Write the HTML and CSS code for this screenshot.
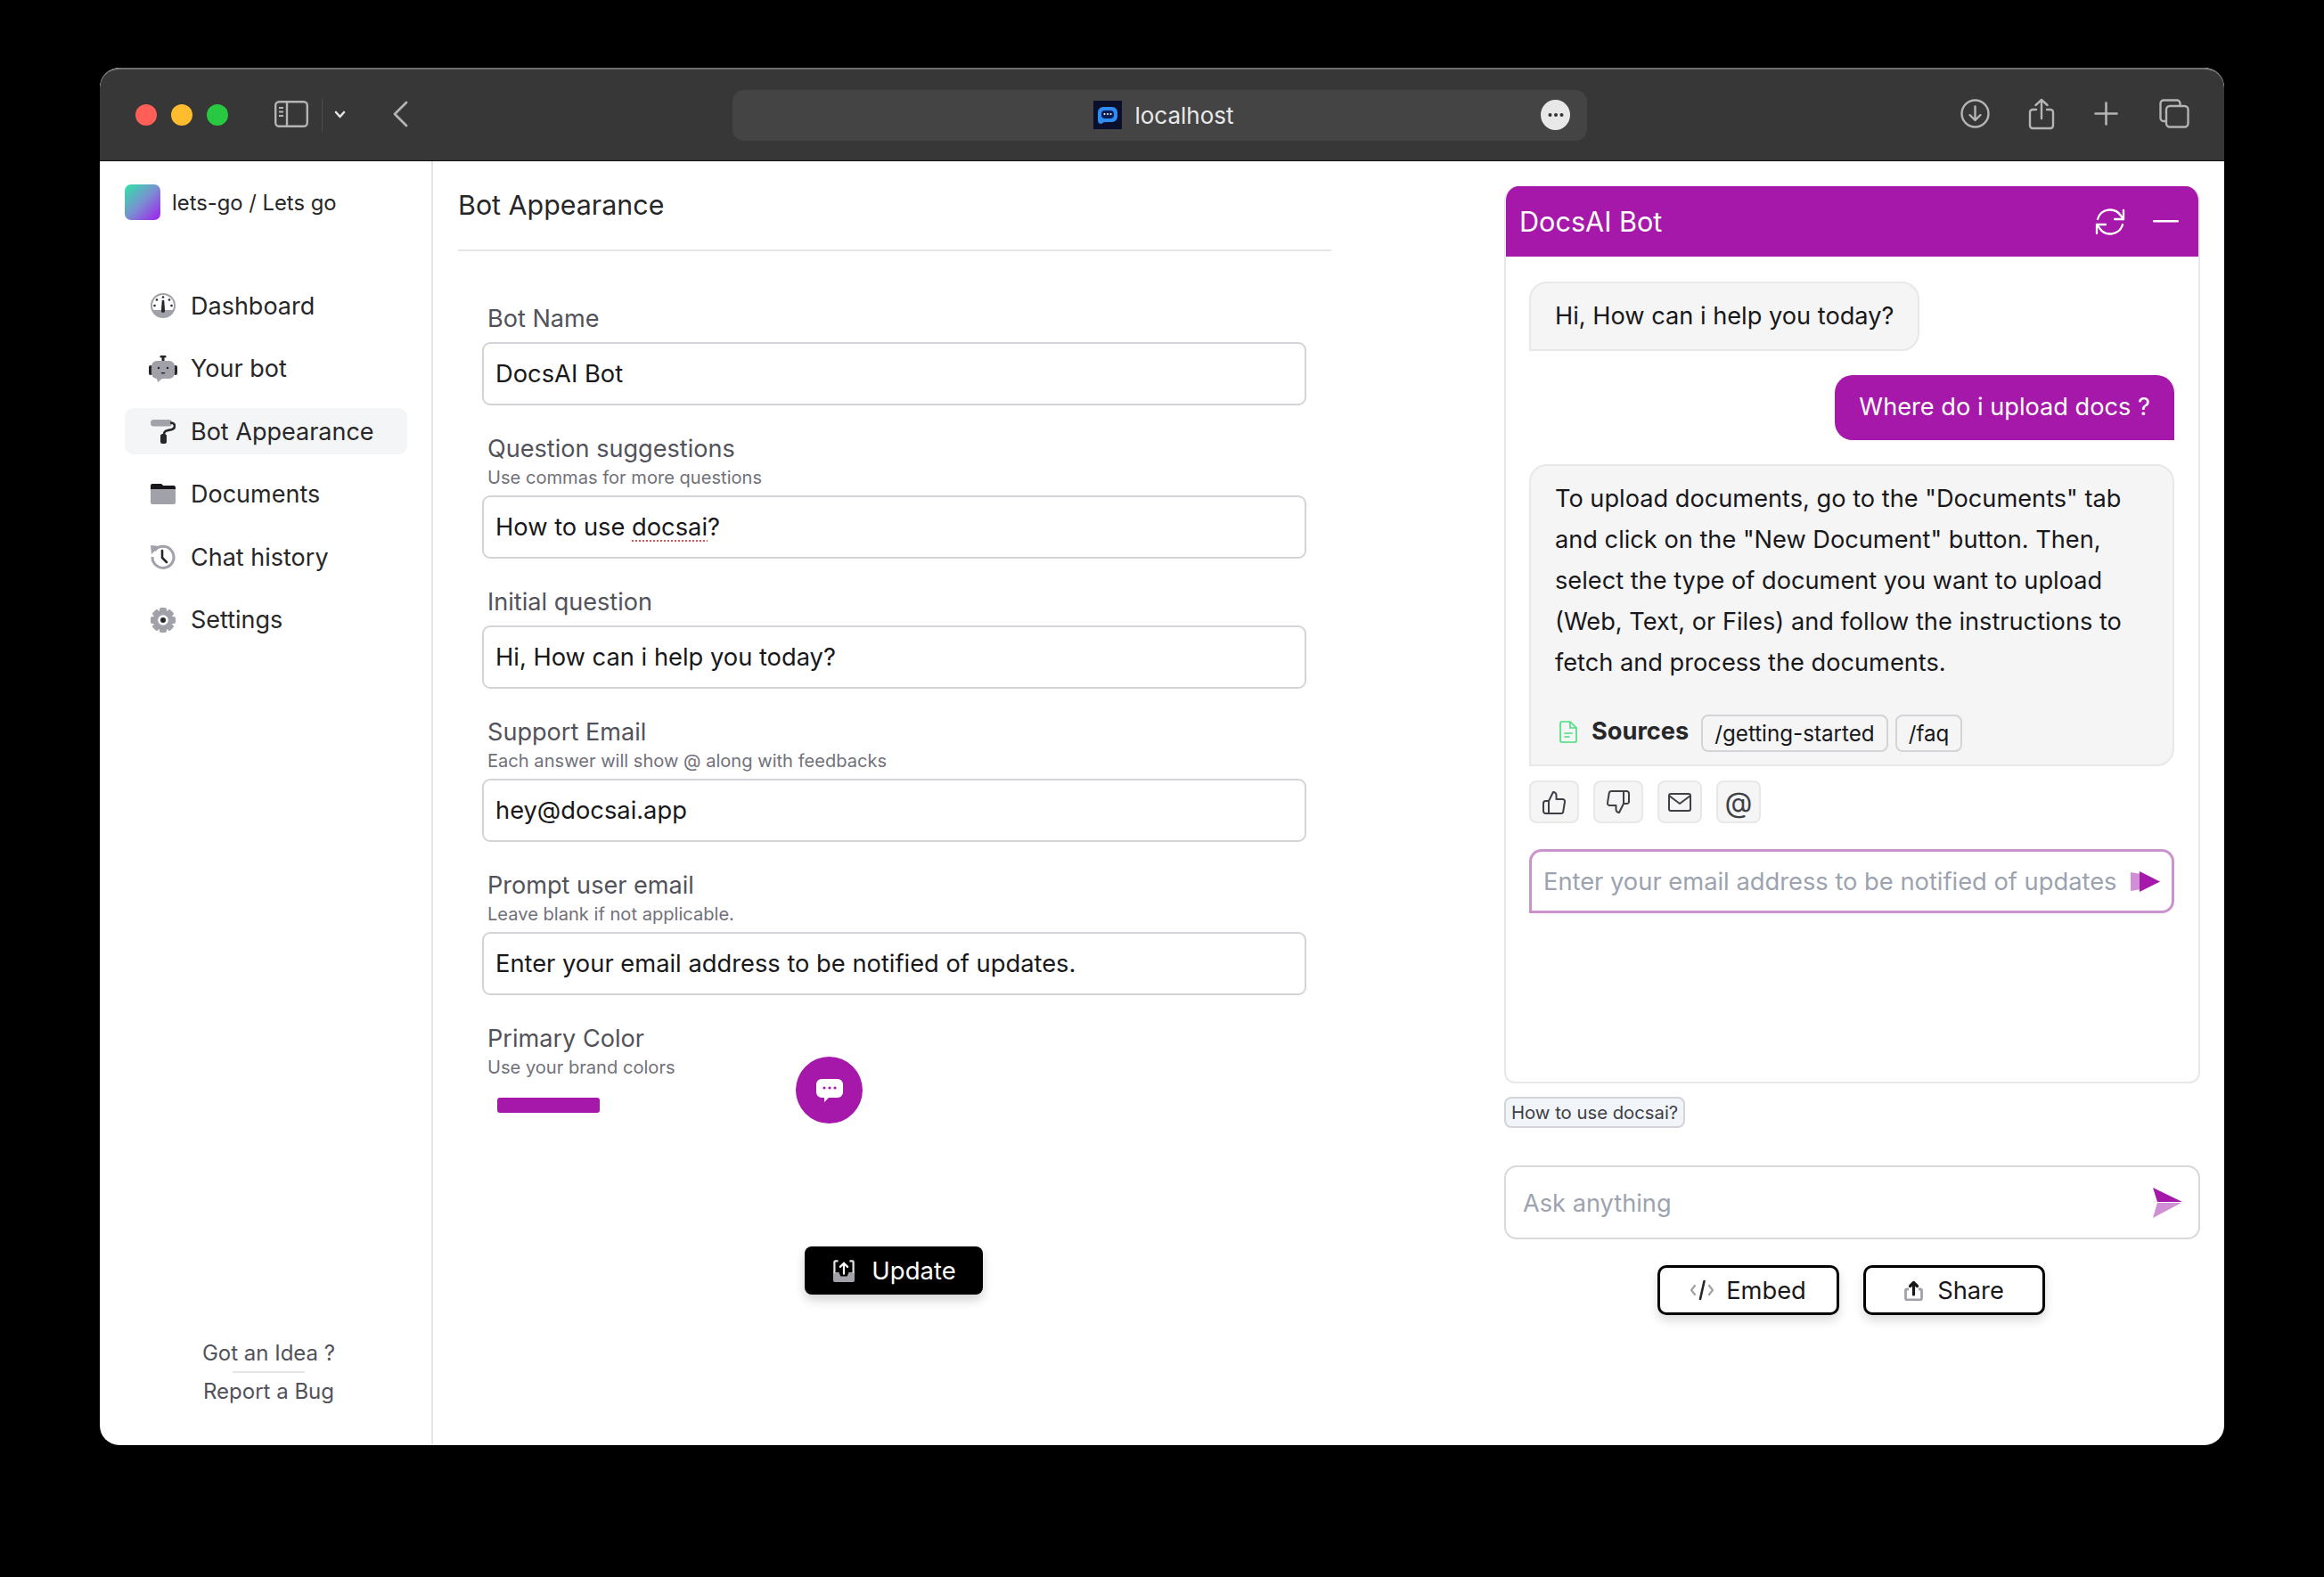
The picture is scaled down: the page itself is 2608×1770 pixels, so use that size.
FILE: index.html
```html
<!DOCTYPE html>
<html lang="en">
<head>
<meta charset="utf-8">
<title>Bot Appearance</title>
<link rel="stylesheet" href="styles.css">
</head>
<body>
<div class="window">
  <header class="titlebar">
    <div class="tb-left">
      <div class="lights"><span class="light red"></span><span class="light yellow"></span><span class="light green"></span></div>
      <svg class="tb-sidebar" width="38" height="30" viewBox="0 0 38 30" fill="none" stroke="#b4b4b4" stroke-width="2.4"><rect x="1.2" y="1.2" width="35.6" height="27.6" rx="4"/><path d="M14 1.5v27"/><path d="M5 8h5M5 12.5h5M5 17h5" stroke-width="1.8"/></svg>
      <span class="tb-sep"></span>
      <svg class="tb-chev" width="13" height="9" viewBox="0 0 13 9" fill="none" stroke="#e2e2e2" stroke-width="2.6" stroke-linecap="round" stroke-linejoin="round"><path d="M2 2l4.500 5L11 2"/></svg>
      <svg class="tb-back" width="18" height="30" viewBox="0 0 18 30" fill="none" stroke="#b4b4b4" stroke-width="2.8" stroke-linecap="round" stroke-linejoin="round"><path d="M16 2L3 15l13 13"/></svg>
    </div>
    <div class="urlbar">
      <svg class="favicon" width="32" height="32" viewBox="0 0 32 32"><rect width="32" height="32" fill="#0a0f2c"/><path d="M11 7h10a6 6 0 016 6v5a6 6 0 01-6 6h-9l-3 2a4 4 0 01-4-4v-9a6 6 0 016-6z" fill="#2f8cf0"/><rect x="9" y="11" width="14" height="9" rx="4" fill="#0d1c52"/><circle cx="12.500" cy="15" r="1" fill="#fff"/><circle cx="16" cy="15" r="1" fill="#fff"/><circle cx="19.500" cy="15" r="1" fill="#fff"/></svg>
      <span class="url-text">localhost</span>
      <span class="url-more"><svg width="20" height="6" viewBox="0 0 20 6" fill="#333"><circle cx="3.500" cy="3" r="2"/><circle cx="10" cy="3" r="2"/><circle cx="16.500" cy="3" r="2"/></svg></span>
    </div>
    <div class="tb-right">
      <svg width="33" height="33" viewBox="0 0 33 33" fill="none" stroke="#b4b4b4" stroke-width="2.4" stroke-linecap="round" stroke-linejoin="round"><circle cx="16.500" cy="16.500" r="15"/><path d="M16.500 8.500v15M10.500 18l6 6 6-6"/></svg>
      <svg width="30" height="36" viewBox="0 0 30 36" fill="none" stroke="#b4b4b4" stroke-width="2.4" stroke-linecap="round" stroke-linejoin="round"><path d="M9 13H5a3 3 0 00-3 3v15a3 3 0 003 3h20a3 3 0 003-3V16a3 3 0 00-3-3h-4"/><path d="M15 23V2M8.500 8L15 2l6.500 6"/></svg>
      <svg width="27" height="27" viewBox="0 0 27 27" fill="none" stroke="#b4b4b4" stroke-width="2.6" stroke-linecap="round"><path d="M13.500 1.500v24M1.500 13.500h24"/></svg>
      <svg width="34" height="33" viewBox="0 0 34 33" fill="none" stroke="#b4b4b4" stroke-width="2.4"><path d="M7 25H5a3.500 3.500 0 01-3.500-3.500V5A3.500 3.500 0 015 1.500h15A3.500 3.500 0 0123.500 5v3"/><rect x="8" y="8" width="24.500" height="23.500" rx="4"/></svg>
    </div>
  </header>

  <div class="content">
    <aside class="sidebar">
      <div class="workspace">
        <span class="ws-logo"></span>
        <span class="ws-name">lets-go / Lets go</span>
      </div>
      <nav class="nav">
        <a class="nav-item">
          <svg class="nav-icon" viewBox="0 0 28 28"><circle cx="14" cy="14" r="14" fill="#a1a1aa"/><path d="M2 14a12 12 0 0124 0c0 2.500-.6 4-1.500 5h-21C2.600 18 2 16.500 2 14z" fill="#fff"/><path d="M12.800 8h2.400l.9 12a2.100 2.100 0 11-4.200 0z" fill="#27272a"/><circle cx="14" cy="4.500" r="1.300" fill="#27272a"/><circle cx="7" cy="7.500" r="1.300" fill="#27272a"/><circle cx="21" cy="7.500" r="1.300" fill="#27272a"/><circle cx="4.500" cy="14" r="1.300" fill="#27272a"/><circle cx="23.500" cy="14" r="1.300" fill="#27272a"/></svg>
          <span>Dashboard</span>
        </a>
        <a class="nav-item">
          <svg class="nav-icon wide" viewBox="0 0 32 30"><rect x="14.500" y="2" width="3" height="6" fill="#27272a"/><rect x="12.500" y="0" width="7" height="2.500" rx="1.200" fill="#27272a"/><rect x="0" y="11" width="4" height="11" rx="2" fill="#27272a"/><rect x="28" y="11" width="4" height="11" rx="2" fill="#27272a"/><path d="M9 6h14a6 6 0 016 6v8a6 6 0 01-6 6h-8l-5 4-1-4a6 6 0 01-6-6v-8a6 6 0 016-6z" fill="#a1a1aa"/><circle cx="11" cy="14" r="1.200" fill="#27272a"/><circle cx="21" cy="14" r="1.200" fill="#27272a"/><path d="M13.500 19h5l-1 1.500h-3z" fill="#27272a"/></svg>
          <span>Your bot</span>
        </a>
        <a class="nav-item active">
          <svg class="nav-icon" viewBox="0 0 28 28"><rect x="0" y="1" width="24" height="7.500" rx="3.500" fill="#a1a1aa"/><path d="M22 4.500c4 0 5 1.500 5 3.500 0 3-2 4-5 4.500-4 .7-7 1-7 5" fill="none" stroke="#27272a" stroke-width="2.600"/><rect x="11" y="17" width="7" height="11" rx="2.500" fill="#27272a"/></svg>
          <span>Bot Appearance</span>
        </a>
        <a class="nav-item">
          <svg class="nav-icon" viewBox="0 0 28 28"><path d="M2 2h9c1.500 0 2 .6 3 2h12a2 2 0 012 2v5H0V4a2 2 0 012-2z" fill="#18181b"/><path d="M0 8h28v15a2 2 0 01-2 2H2a2 2 0 01-2-2z" fill="#a1a1aa"/></svg>
          <span>Documents</span>
        </a>
        <a class="nav-item">
          <svg class="nav-icon" viewBox="0 0 28 28"><path d="M4.500 7A12 12 0 112 14" fill="none" stroke="#a1a1aa" stroke-width="3"/><path d="M0 1l10 1-9 9z" fill="#a1a1aa"/><path d="M13 7v8l5 5" fill="none" stroke="#27272a" stroke-width="2.600" stroke-linecap="round" stroke-linejoin="round"/></svg>
          <span>Chat history</span>
        </a>
        <a class="nav-item">
          <svg class="nav-icon" viewBox="0 0 28 28"><g fill="#a1a1aa"><rect x="10" y="0" width="8" height="28" rx="2"/><rect x="10" y="0" width="8" height="28" rx="2" transform="rotate(45 14 14)"/><rect x="10" y="0" width="8" height="28" rx="2" transform="rotate(90 14 14)"/><rect x="10" y="0" width="8" height="28" rx="2" transform="rotate(135 14 14)"/><circle cx="14" cy="14" r="11"/></g><circle cx="14" cy="14" r="5.800" fill="#fff"/><circle cx="14" cy="14" r="3" fill="#27272a"/></svg>
          <span>Settings</span>
        </a>
      </nav>
      <div class="side-foot">
        <a class="foot-link">Got an Idea ?</a>
        <span class="foot-rule"></span>
        <a class="foot-link">Report a Bug</a>
      </div>
    </aside>

    <main class="main">
      <section class="settings">
        <h1 class="page-title">Bot Appearance</h1>
        <div class="form">
          <div class="field">
            <div class="label">Bot Name</div>
            <div class="input">DocsAI Bot</div>
          </div>
          <div class="field">
            <div class="label">Question suggestions</div>
            <div class="hint">Use commas for more questions</div>
            <div class="input">How to use <span class="misspelled">docsai</span>?</div>
          </div>
          <div class="field">
            <div class="label">Initial question</div>
            <div class="input">Hi, How can i help you today?</div>
          </div>
          <div class="field">
            <div class="label">Support Email</div>
            <div class="hint">Each answer will show @ along with feedbacks</div>
            <div class="input">hey@docsai.app</div>
          </div>
          <div class="field">
            <div class="label">Prompt user email</div>
            <div class="hint">Leave blank if not applicable.</div>
            <div class="input">Enter your email address to be notified of updates.</div>
          </div>
          <div class="color-row">
            <div class="color-left">
              <div class="label">Primary Color</div>
              <div class="hint">Use your brand colors</div>
              <div class="swatch"></div>
            </div>
            <div class="launcher">
              <svg width="30" height="26" viewBox="0 0 30 26"><path d="M6 0h18a6 6 0 016 6v9a6 6 0 01-6 6H14l-5 5v-5H6a6 6 0 01-6-6V6a6 6 0 016-6z" fill="#fff"/><circle cx="9" cy="10" r="1.600" fill="#a618aa"/><circle cx="15" cy="10" r="1.600" fill="#a618aa"/><circle cx="21" cy="10" r="1.600" fill="#a618aa"/></svg>
            </div>
          </div>
          <div class="update-wrap">
            <button class="update-btn">
              <svg width="24" height="27" viewBox="0 0 26 27"><path d="M0 15h7l2 5h8l2-5h7v10a2 2 0 01-2 2H2a2 2 0 01-2-2z" fill="#a1a1aa"/><path d="M6 1.500H2.500a1 1 0 00-1 1V16M20 1.500h3.500a1 1 0 011 1V16" fill="none" stroke="#e4e4e7" stroke-width="2.400"/><path d="M13 17V4M8.500 8.500L13 4l4.500 4.500" fill="none" stroke="#fff" stroke-width="2.400" stroke-linecap="round" stroke-linejoin="round"/></svg>
              <span>Update</span>
            </button>
          </div>
        </div>
      </section>

      <section class="chat">
        <div class="widget">
          <div class="widget-head">
            <span class="widget-title">DocsAI Bot</span>
            <div class="widget-tools">
              <svg width="34" height="32" viewBox="0 0 34 32" fill="none" stroke="#fff" stroke-width="2.300" stroke-linecap="round" stroke-linejoin="round"><path d="M3 13A14.500 14.500 0 0129 9l3 4"/><path d="M32 3v10H22"/><path d="M31 19A14.500 14.500 0 015 23l-3-4"/><path d="M2 29V19h10"/></svg>
              <svg width="29" height="3" viewBox="0 0 29 3"><rect width="29" height="2.600" rx="1.300" fill="#fff"/></svg>
            </div>
          </div>
          <div class="widget-body">
            <div class="bubble bot short">Hi, How can i help you today?</div>
            <div class="bubble user">Where do i upload docs ?</div>
            <div class="bubble bot long">
              <p class="answer">To upload documents, go to the "Documents" tab and click on the "New Document" button. Then, select the type of document you want to upload (Web, Text, or Files) and follow the instructions to fetch and process the documents.</p>
              <div class="sources">
                <svg class="src-icon" width="20" height="25" viewBox="0 0 20 25" fill="none" stroke="#4ade80" stroke-width="1.700" stroke-linejoin="round"><path d="M2 1h10l7 7v14a2 2 0 01-2 2H3a2 2 0 01-2-2V2z"/><path d="M12 1v7h7"/><path d="M6 14h8M6 18h5" stroke-linecap="round"/></svg>
                <strong class="src-label">Sources</strong>
                <span class="src-chip">/getting-started</span>
                <span class="src-chip">/faq</span>
              </div>
            </div>
            <div class="feedback">
              <span class="fb-btn"><svg width="26" height="27" viewBox="0 0 26 27" fill="none" stroke="#3f3f46" stroke-width="2" stroke-linecap="round" stroke-linejoin="round"><path d="M7 12l5-10a3.500 3.500 0 013.500 3.500V10h7a2.500 2.500 0 012.500 3l-1.700 10.500A2.500 2.500 0 0121.300 26H7z"/><path d="M7 12H3.500A2.500 2.500 0 001 14.500v9A2.500 2.500 0 003.500 26H7"/></svg></span>
              <span class="fb-btn"><svg width="26" height="27" viewBox="0 0 26 27" fill="none" stroke="#3f3f46" stroke-width="2" stroke-linecap="round" stroke-linejoin="round"><path d="M19 15l-5 10a3.500 3.500 0 01-3.500-3.500V17h-7A2.500 2.500 0 011 14L2.700 3.500A2.500 2.500 0 015.200 1H19z"/><path d="M19 1h3.500A2.500 2.500 0 0125 3.500V12a2.500 2.500 0 01-2.500 3H19"/></svg></span>
              <span class="fb-btn narrow"><svg width="26" height="21" viewBox="0 0 26 21" fill="none" stroke="#3f3f46" stroke-width="2" stroke-linejoin="round"><rect x="1" y="1" width="24" height="19" rx="2"/><path d="M1 3l12 9 12-9"/></svg></span>
              <span class="fb-btn narrow at">@</span>
            </div>
            <div class="email-box">
              <span class="email-ph">Enter your email address to be notified of updates</span>
              <svg width="33" height="23" viewBox="0 0 33 23"><path d="M0 1l12 2v17L0 22z" fill="#d08fd4"/><path d="M10 0l23 11.500L10 23z" fill="#a618aa"/></svg>
            </div>
          </div>
        </div>
        <div class="suggest">How to use docsai?</div>
        <div class="ask">
          <span class="ask-ph">Ask anything</span>
          <svg width="34" height="34" viewBox="0 0 34 34"><path d="M1 0l33 16H6z" fill="#a618aa"/><path d="M6 17h27L1 34z" fill="#d08fd4"/></svg>
        </div>
        <div class="chat-actions">
          <button class="out-btn">
            <svg width="26" height="24" viewBox="0 0 26 24" fill="none" stroke-linecap="round" stroke-linejoin="round"><path d="M5 7l-4 5 4 5M21 7l4 5-4 5" stroke="#a1a1aa" stroke-width="2.200"/><path d="M15.500 2l-4.500 20" stroke="#27272a" stroke-width="2.600"/></svg>
            <span>Embed</span>
          </button>
          <button class="out-btn share">
            <svg width="21" height="23" viewBox="0 0 21 23"><path d="M5 10H3a1.500 1.500 0 00-1.500 1.500V20a2 2 0 002 2h14a2 2 0 002-2v-8.500A1.500 1.500 0 0018 10h-2" fill="none" stroke="#a1a1aa" stroke-width="2.800"/><path d="M10.500 16V3M6.500 6.500l4-4 4 4" fill="none" stroke="#18181b" stroke-width="3.200" stroke-linecap="round" stroke-linejoin="round"/></svg>
            <span>Share</span>
          </button>
        </div>
      </section>
    </main>
  </div>
</div>
</body>
</html>
```
FILE: styles.css
```css
* { box-sizing: border-box; }
html, body { margin: 0; padding: 0; background: #000; }
body { width: 2608px; height: 1770px; padding: 76px 112px 0; font-family: "Inter", "Liberation Sans", sans-serif; color: #18181b; }

.window { width: 2384px; height: 1546px; border-radius: 22px; overflow: hidden; background: #fff; display: flex; flex-direction: column; }

.titlebar { flex: 0 0 105px; height: 105px; background: #373737; border-top: 2px solid #6f6f6f; border-bottom: 1px solid #111; border-radius: 22px 22px 0 0; display: grid; grid-template-columns: 710px 959px 1fr; align-items: center; }
.tb-left { display: flex; align-items: center; padding-left: 40px; }
.lights { display: flex; gap: 16px; }
.light { width: 24px; height: 24px; border-radius: 50%; }
.red { background: #ff5f57; }
.yellow { background: #febc2e; }
.green { background: #28c840; }
.tb-sidebar { margin: -2px 0 0 52px; }
.tb-sep { width: 1px; height: 37px; background: #4c4c4c; margin-left: 15px; }
.tb-chev { margin: -2px 0 0 13px; }
.tb-back { margin: -2px 0 0 52px; }

.urlbar { position: relative; height: 57px; background: #444; border-radius: 13px; display: flex; align-items: center; justify-content: center; gap: 14px; padding-left: 9px; }
.favicon { display: block; }
.url-text { font-size: 26px; color: #e8e8e8; }
.url-more { position: absolute; right: 19px; top: 11px; width: 33px; height: 34px; border-radius: 50%; background: #e8e8e8; display: flex; align-items: center; justify-content: center; }

.tb-right { display: flex; align-items: center; justify-content: flex-end; gap: 44px; padding: 0 39px 3px 0; }
.tb-right svg:nth-child(3) { margin-right: 2px; }
.tb-right svg:nth-child(1) { margin-right: -1px; }

.content { flex: 1; display: flex; min-height: 0; }

.sidebar { flex: 0 0 374px; width: 374px; border-right: 2px solid #e5e5e5; padding: 26px 28px 43px; display: flex; flex-direction: column; }
.workspace { display: flex; align-items: center; gap: 13px; height: 40px; }
.ws-logo { width: 40px; height: 40px; border-radius: 7px; background: linear-gradient(135deg, #2ee6a8 0%, #7a8fd0 50%, #a21cf0 100%); }
.ws-name { font-size: 23.8px; color: #27272a; padding-top: 1px; }
.nav { margin-top: 70px; display: flex; flex-direction: column; gap: 18.6px; }
.nav-item { height: 52px; width: 317px; display: flex; align-items: center; gap: 17px; padding-left: 29px; border-radius: 10px; font-size: 27px; color: #27272a; }
.nav-item.active { background: #f4f5f6; }
.nav-icon { width: 28px; height: 28px; flex: none; }
.nav-icon.wide { width: 32px; height: 30px; margin-left: -2px; margin-right: -2px; }
.side-foot { margin-top: auto; padding-left: 7px; display: flex; flex-direction: column; align-items: center; font-size: 24px; color: #52525b; }
.foot-link { line-height: 34px; }
.foot-rule { width: 81px; height: 2px; background: #e5e5e5; margin: 3px 0 4px; }

.main { flex: 1; display: flex; justify-content: space-between; padding: 0 27px 0 28px; min-width: 0; }

.settings { width: 980px; }
.page-title { margin: 0; padding: 29px 0 30px; line-height: 40px; font-size: 30.4px; font-weight: 400; color: #27272a; border-bottom: 2px solid #e5e5e5; }
.form { padding: 60px 28px 0 27px; display: flex; flex-direction: column; gap: 33px; }
.label { line-height: 32px; font-size: 27.1px; color: #52525b; padding-left: 6px; }
.hint { line-height: 22px; font-size: 20.1px; color: #71717a; padding-left: 6px; margin-top: 5px; }
.input { height: 71px; margin-top: 10px; border: 2px solid #d4d4d8; border-radius: 9px; padding: 0 13px; display: flex; align-items: center; white-space: pre; font-size: 27.3px; color: #18181b; }
.hint + .input { margin-top: 9px; }
.misspelled { text-decoration: underline dotted #e05252 2px; text-underline-offset: 5px; }

.color-row { display: flex; align-items: flex-end; }
.color-left { width: 352px; padding-bottom: 12px; }
.swatch { width: 115px; height: 17px; border-radius: 3px; background: #a618aa; margin: 23px 0 0 17px; }
.launcher { width: 75px; height: 75px; border-radius: 50%; background: #a618aa; display: flex; align-items: center; justify-content: center; }
.update-wrap { display: flex; justify-content: center; margin-top: 105px; padding-right: 2px; }
.update-btn { width: 200px; height: 54px; border: 0; border-radius: 8px; background: #000; color: #fff; font: inherit; font-size: 27.500px; padding: 0 0 0 3px; display: flex; align-items: center; justify-content: center; gap: 19px; box-shadow: 0 6px 12px rgba(0,0,0,.18); }

.chat { width: 781px; padding-top: 28px; display: flex; flex-direction: column; }
.widget { height: 1007px; border: 2px solid #e8e8ea; border-top: 0; border-radius: 16px 16px 12px 12px; overflow: hidden; display: flex; flex-direction: column; }
.widget-head { height: 79px; margin: 0 -2px; background: #a618aa; color: #fff; padding: 0 24px 0 17px; display: flex; align-items: center; justify-content: space-between; }
.widget-title { font-size: 30.6px; }
.widget-tools { display: flex; align-items: center; gap: 31px; }
.widget-body { padding: 28px 27px 0 26px; display: flex; flex-direction: column; align-items: flex-start; font-size: 27.2px; }
.bubble { line-height: 46px; border-radius: 20px; }
.bot { background: #f5f5f6; border: 2px solid #e8e8ea; color: #18181b; border-bottom-left-radius: 0; }
.short { padding: 14px 27px; }
.user { align-self: flex-end; margin-top: 27px; padding: 13px 27px 14px; background: #a618aa; color: #fff; border-bottom-right-radius: 0; }
.long { margin-top: 27px; width: 724px; padding: 14px 27px 14px; }
.answer { margin: 0; }
.sources { margin-top: 35px; display: flex; align-items: center; height: 42px; }
.src-icon { margin-left: 5px; margin-top: -4px; }
.src-label { font-weight: 700; color: #27272a; margin-left: 16px; margin-right: 14px; margin-top: -4px; }
.src-chip { height: 42px; line-height: 40px; padding: 0 13px; border: 2px solid #d4d4d8; border-radius: 8px; font-size: 24.2px; margin-right: 8px; }
.feedback { margin-top: 16px; display: flex; gap: 16px; }
.fb-btn { width: 56px; height: 48px; border: 2px solid #e8e8ea; border-radius: 8px; background: #f5f5f6; display: flex; align-items: center; justify-content: center; }
.fb-btn.narrow { width: 50px; }
.at { font-size: 32px; color: #3f3f46; }
.email-box { margin-top: 29px; width: 724px; height: 72px; border: 3px solid #cb93cd; border-radius: 14px 14px 14px 0; padding: 0 13px 0 13px; display: flex; align-items: center; justify-content: space-between; }
.email-ph { color: #9ca3af; font-size: 27.3px; white-space: nowrap; }
.suggest { align-self: flex-start; margin-top: 15px; height: 35px; line-height: 31px; padding: 0 6px; border: 2px solid #d4d4d8; border-radius: 8px; background: #f1f5f9; font-size: 20.3px; color: #3f3f46; }
.ask { margin-top: 42px; height: 83px; border: 2px solid #d9d9dc; border-radius: 14px; padding: 0 18px 0 19px; display: flex; align-items: center; justify-content: space-between; }
.ask-ph { font-size: 27.2px; color: #9ca3af; padding-top: 2px; }
.chat-actions { margin-top: 29px; display: flex; justify-content: center; gap: 27px; padding-right: 2px; }
.out-btn { width: 204px; height: 56px; border: 3px solid #000; border-radius: 10px; background: #fff; font: inherit; font-size: 27.300px; color: #18181b; display: flex; align-items: center; justify-content: center; gap: 14px; box-shadow: 0 6px 12px rgba(0,0,0,.14); }
.out-btn.share { gap: 16px; }
```
